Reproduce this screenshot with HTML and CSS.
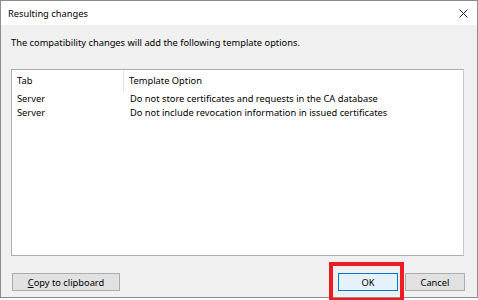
FILE: index.html
```html
<!DOCTYPE html>
<html lang="en">
<head>
    <meta charset="UTF-8">
    <meta name="viewport" content="width=device-width, initial-scale=1.0">
    <title>Resulting changes</title>
    <link rel="stylesheet" href="styles.css">
</head>
<body>
    <div class="window">
        <div class="titlebar">
            <span class="title">Resulting changes</span>
            <button class="close-btn" aria-label="Close">
                <svg width="9" height="9" viewBox="0 0 9 9">
                    <path d="M0.5 0.5 L8.5 8.5 M8.5 0.5 L0.5 8.5" stroke="#222" stroke-width="1" fill="none"/>
                </svg>
            </button>
        </div>
        <div class="content">
            <p class="message">The compatibility changes will add the following template options.</p>

            <!-- Changes list -->
            <div class="list">
                <div class="list-row list-header">
                    <div class="col col-tab">Tab</div>
                    <div class="col col-option">Template Option</div>
                </div>
                <div class="list-row">
                    <div class="col col-tab">Server</div>
                    <div class="col col-option">Do not store certificates and requests in the CA database</div>
                </div>
                <div class="list-row">
                    <div class="col col-tab">Server</div>
                    <div class="col col-option">Do not include revocation information in issued certificates</div>
                </div>
            </div>

            <div class="footer">
                <button class="btn btn-copy"><u>C</u>opy to clipboard</button>
                <div class="footer-right">
                    <button class="btn btn-default">OK</button>
                    <button class="btn">Cancel</button>
                </div>
                <div class="highlight"></div>
            </div>
        </div>
    </div>
</body>
</html>
```
FILE: styles.css
```css
* {
    margin: 0;
    padding: 0;
    box-sizing: border-box;
    font-family: 'Noto Sans', 'Open Sans', sans-serif;
}

body {
    background-color: white;
    width: 478px;
    height: 300px;
    overflow: hidden;
}

.window {
    width: 478px;
    height: 298px;
    border: 1px solid #8c8c8c;
    display: flex;
    flex-direction: column;
    background-color: #f0f0f0;
}

.titlebar {
    height: 24px;
    background-color: white;
    display: flex;
    align-items: center;
    justify-content: space-between;
    padding-left: 7px;
    padding-right: 9px;
}

.title {
    font-size: 9.3px;
    color: #000;
}

.close-btn {
    background: none;
    border: none;
    width: 9px;
    height: 9px;
    margin-top: 1px;
    display: flex;
}

.content {
    flex: 1;
    display: flex;
    flex-direction: column;
    padding: 10px 12px 6px 10px;
}

.message {
    font-size: 9.3px;
    line-height: 16px;
    color: #000;
    margin-bottom: 18px;
}

.list {
    height: 187px;
    background-color: white;
    border: 1px solid #adadad;
    border-right-color: #c8c8c8;
    margin-right: 1px;
}

.list-row {
    display: flex;
    font-size: 9.3px;
    line-height: 14px;
    color: #000;
}

.list-header {
    height: 22px;
    align-items: center;
}

.col {
    padding-left: 5px;
    white-space: nowrap;
}

.col-tab {
    width: 112px;
}

.list-header .col-tab {
    height: 22px;
    line-height: 22px;
    border-right: 1px solid #e5e5e5;
}

.list-row:not(.list-header) .col-option {
    padding-left: 6px;
}

.footer {
    position: relative;
    display: flex;
    justify-content: space-between;
    margin-top: 17px;
    padding-left: 1px;
}

.footer-right {
    display: flex;
    gap: 7px;
}

.btn {
    height: 18px;
    width: 60px;
    background-color: #e1e1e1;
    border: 1px solid #adadad;
    font-size: 9.3px;
    color: #000;
}

.btn-copy {
    width: 108px;
}

.btn-default {
    background-color: #e5f1fb;
    border-color: #0078d7;
}

/* Annotation box round the OK button */
.highlight {
    position: absolute;
    left: 318px;
    top: -11px;
    width: 75px;
    height: 40px;
    border: 4px solid #ec1c24;
}
```
